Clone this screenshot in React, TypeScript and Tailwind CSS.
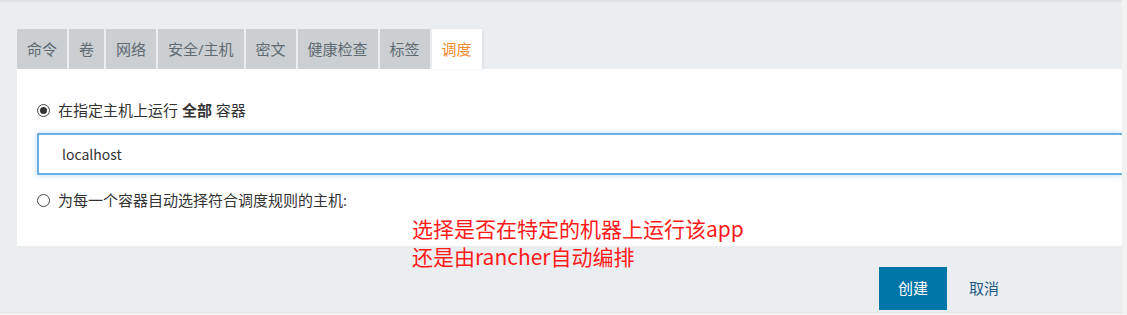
import React from "react";

const tabs = ["命令", "卷", "网络", "安全/主机", "密文", "健康检查", "标签"];

function Radio({ checked }: { checked?: boolean }) {
  return (
    <span className="w-[13px] h-[13px] rounded-full border border-[#444] bg-white flex items-center justify-center shrink-0">
      {checked && <span className="w-[7px] h-[7px] rounded-full bg-[#333]" />}
    </span>
  );
}

export default function App() {
  return (
    <div
      className="w-[1127px] h-[315px] bg-[#f2f2f2] relative overflow-hidden"
      style={{ fontFamily: '"Open Sans", "Noto Sans CJK SC", sans-serif' }}
    >
      <div className="w-[1122px] h-[313px] border-t-2 border-[#e0e2e3] border-b border-b-[#e2e2e2] bg-[#ebeef0] pl-[17px] pt-[27px]">
        <div className="flex gap-[2px] h-[40px]">
          {tabs.map((t) => (
            <div
              key={t}
              className="h-[40px] px-[10px] bg-[#cbcfd1] text-[15px] text-[#5f6a72] flex items-center"
            >
              {t}
            </div>
          ))}
          <div className="h-[40px] px-[10px] bg-white text-[15px] text-[#f08a2c] flex items-center shadow-[1px_0_3px_rgba(0,0,0,0.08)]">
            调度
          </div>
        </div>
        <div className="bg-white h-[177px] pl-[20px] pt-[31px] overflow-hidden">
          <label className="flex items-center gap-[8px] h-[20px] text-[15px] text-[#333]">
            <Radio checked />
            <span>
              在指定主机上运行 <b className="font-bold">全部</b> 容器
            </span>
          </label>
          <div
            className="mt-[13px] h-[42px] border-2 border-r-0 border-[#6aaee6] shadow-[0_0_6px_rgba(106,174,230,0.45)] flex items-center pl-[23px] text-[14px] text-[#333]"
            style={{ fontFamily: '"Noto Sans CJK SC", sans-serif' }}
          >
            localhost
          </div>
          <label className="mt-[15px] flex items-center gap-[8px] h-[20px] text-[15px] text-[#333]">
            <Radio />
            <span>为每一个容器自动选择符合调度规则的主机:</span>
          </label>
        </div>
        <div className="flex justify-end pr-[103px] mt-[21px] gap-[2px]">
          <button className="h-[43px] px-[19px] bg-[#0075a8] text-white text-[15px]">
            创建
          </button>
          <button className="h-[43px] px-[20px] text-[#1f5a86] text-[15px]">
            取消
          </button>
        </div>
      </div>
      <div
        className="absolute left-[412px] top-[214px] text-[21px] leading-[28px] text-[#ff1a1a]"
        style={{ fontFamily: '"Noto Sans CJK SC", sans-serif' }}
      >
        <div>选择是否在特定的机器上运行该app</div>
        <div>还是由rancher自动编排</div>
      </div>
    </div>
  );
}
